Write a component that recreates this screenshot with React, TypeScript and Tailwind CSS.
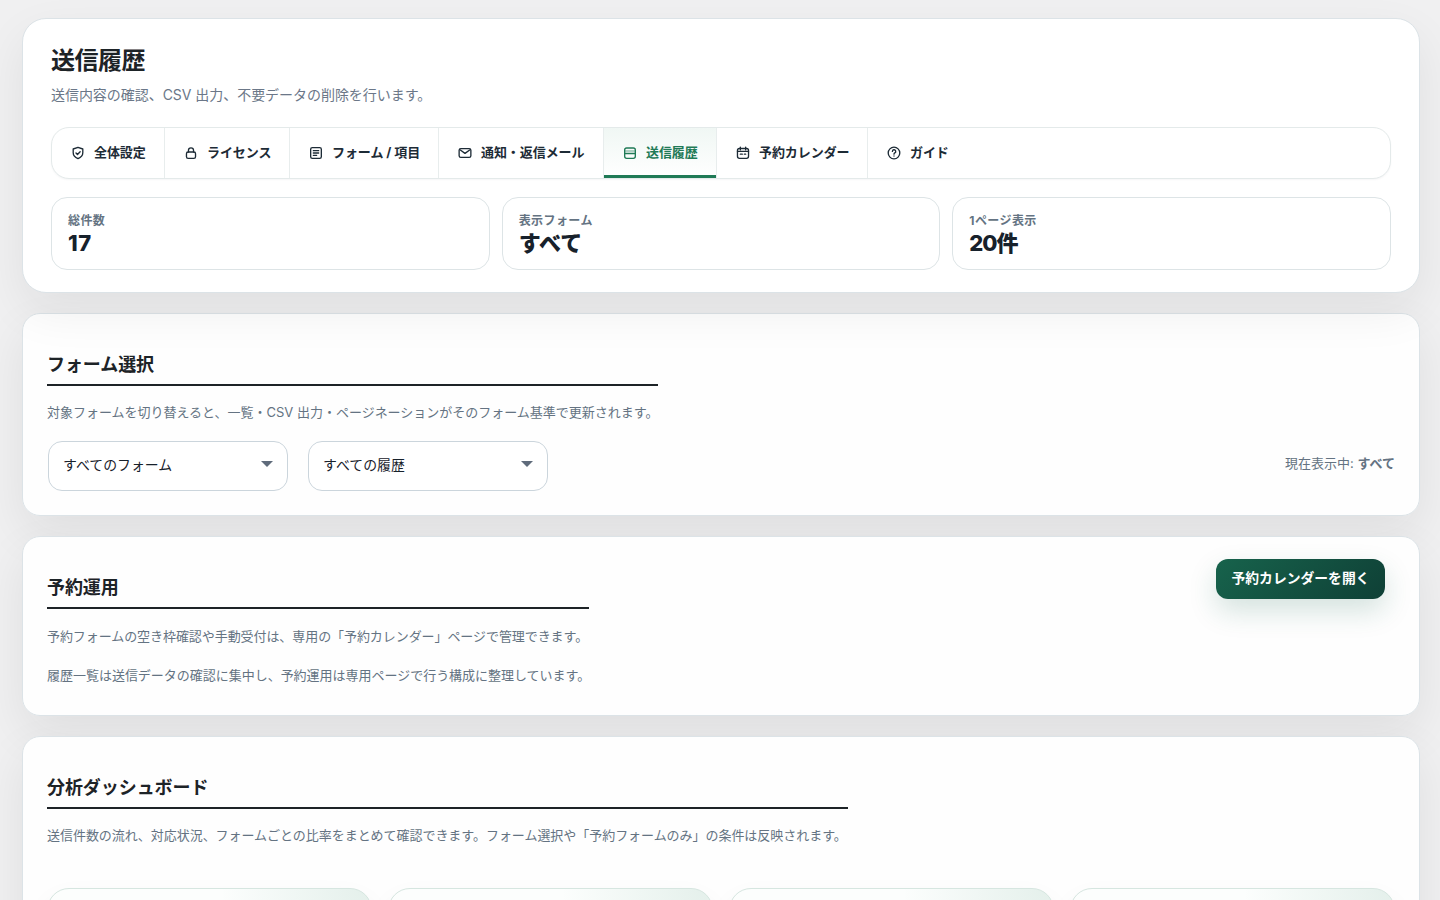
import React from 'react';

type IconProps = { children: React.ReactNode };

const Icon = ({ children }: IconProps) => (
  <svg
    className="h-4 w-4 shrink-0"
    viewBox="0 0 24 24"
    fill="none"
    stroke="currentColor"
    strokeWidth="2"
    strokeLinecap="round"
    strokeLinejoin="round"
  >
    {children}
  </svg>
);

const tabs = [
  {
    label: '全体設定',
    width: 'w-[113px]',
    icon: (
      <>
        <path d="M12 3.5l7.2 2.5v5.5c0 4.3-3 7.2-7.2 9-4.2-1.8-7.2-4.7-7.2-9V6z" />
        <path d="M9 12l2.2 2.2 4-4.2" />
      </>
    ),
  },
  {
    label: 'ライセンス',
    width: 'w-[125px]',
    icon: (
      <>
        <rect x="5.2" y="10.5" width="13.6" height="9.5" rx="2.5" />
        <path d="M8.2 10.5V8a3.8 3.8 0 0 1 7.6 0v2.5" />
      </>
    ),
  },
  {
    label: 'フォーム / 項目',
    width: 'w-[149px]',
    icon: (
      <>
        <rect x="4" y="4" width="16" height="16" rx="2.5" />
        <path d="M8 8.5h8M8 12h8M8 15.5h5" />
      </>
    ),
  },
  {
    label: '通知・返信メール',
    width: 'w-[165px]',
    icon: (
      <>
        <rect x="3.2" y="5.5" width="17.6" height="13" rx="2.5" />
        <path d="M5 7.5l7 5 7-5" />
      </>
    ),
  },
  {
    label: '送信履歴',
    width: 'w-[113px]',
    active: true,
    icon: (
      <>
        <rect x="4" y="4.5" width="16" height="15.5" rx="3" />
        <path d="M4 12.8h16" />
        <path d="M5 9h14" strokeOpacity="0.45" />
      </>
    ),
  },
  {
    label: '予約カレンダー',
    width: 'w-[151px]',
    icon: (
      <>
        <rect x="3.7" y="5.2" width="16.6" height="14.8" rx="3" />
        <path d="M8 3.2v4M16 3.2v4M3.7 9.5h16.6M8 13.7h3M14 13.7h2" />
      </>
    ),
  },
  {
    label: 'ガイド',
    width: 'w-[100px]',
    icon: (
      <>
        <circle cx="12" cy="12" r="8.7" />
        <path d="M9.6 9.6a2.5 2.5 0 1 1 3.7 2.2c-.9.5-1.3 1-1.3 1.9M12 16.5v.1" />
      </>
    ),
  },
];

const stats = [
  { label: '総件数', value: '17', tracking: 'tracking-[0.02em]' },
  { label: '表示フォーム', value: 'すべて', tracking: 'tracking-normal' },
  { label: '1ページ表示', value: '20件', tracking: 'tracking-[-0.05em]' },
];

const Tabs = () => (
  <nav className="mt-[21px] flex h-[52px] overflow-hidden rounded-[18px] border border-[#e4eaea] bg-white shadow-[0_1px_2px_rgba(15,23,42,0.04)]">
    {tabs.map((tab, i) => (
      <a
        key={tab.label}
        className={`flex shrink-0 items-center gap-2 whitespace-nowrap pl-[18px] text-[13px] font-bold tracking-[-0.005em] ${tab.width} ${
          i < tabs.length - 1 ? 'border-r border-[#e8eded]' : ''
        } ${
          tab.active
            ? 'bg-linear-to-b from-[#f0f7f4] to-white text-[#1f7a56] shadow-[inset_0_-3px_0_#1f7a56]'
            : 'text-[#1d2b36]'
        }`}
      >
        <Icon>{tab.icon}</Icon>
        <span>{tab.label}</span>
      </a>
    ))}
  </nav>
);

const Heading = ({ children }: { children: React.ReactNode }) => (
  <h2 className="border-b-2 border-[#1d2327] pb-1.5 text-[18px] leading-[27px] font-bold tracking-[-0.004em] text-[#1d2327]">
    {children}
  </h2>
);

const Note = ({ children, className = '' }: { children: React.ReactNode; className?: string }) => (
  <p className={`whitespace-nowrap text-[13px] leading-5 text-[#647382] ${className}`}>{children}</p>
);

const Select = ({ label }: { label: string }) => (
  <div className="flex h-[50px] w-60 items-center justify-between rounded-[14px] border border-[#cbd5dc] bg-white pr-3.5 pl-3.5 text-[13.9px] text-[#17212b]">
    <span className="mb-0.5">{label}</span>
    <svg className="mb-1 h-1.5 w-3" viewBox="0 0 12 6" fill="#5f6b7b">
      <path d="M0 0h12L6 6z" />
    </svg>
  </div>
);

const card =
  'rounded-[18px] border border-[#dce3e7] bg-white/93 px-6 shadow-[0_18px_48px_rgba(22,24,28,0.075)]';

const App = () => {
  return (
    <div className="flex h-screen flex-col gap-5 overflow-hidden bg-[#f0f0f1] pt-[18px] pr-5 pl-[22px] font-[Inter,'Noto_Sans_CJK_JP',sans-serif] text-[#1d2327]">
      {/* Page header */}
      <header className="relative h-[275px] shrink-0 rounded-3xl border border-[#dce3e7] bg-white px-7 pt-6 shadow-[0_18px_48px_rgba(22,28,28,0.07)]">
        <h1 className="text-[24px] leading-9 font-bold tracking-[-0.02em]">送信履歴</h1>
        <p className="mt-[5px] text-[14px] leading-[22px] tracking-[-0.003em] text-[#6b7788]">
          送信内容の確認、CSV 出力、不要データの削除を行います。
        </p>
        <Tabs />
        <div className="mt-[18px] grid grid-cols-3 gap-3">
          {stats.map((stat) => (
            <div key={stat.label} className="h-[73px] rounded-2xl border border-[#dde4e6] bg-white px-4 pt-3.5">
              <div className="text-[12px] leading-[18px] font-bold tracking-[0.035em] text-[#647382]">{stat.label}</div>
              <div className={`text-[22px] leading-[26px] font-extrabold text-[#17212b] ${stat.tracking}`}>{stat.value}</div>
            </div>
          ))}
        </div>
      </header>

      {/* Form filter */}
      <section className={`h-[203px] shrink-0 pt-[37px] ${card}`}>
        <div className="w-[611px]">
          <Heading>フォーム選択</Heading>
          <div className="mt-4">
            <Note className="tracking-[-0.01px]">
              対象フォームを切り替えると、一覧・CSV 出力・ページネーションがそのフォーム基準で更新されます。
            </Note>
          </div>
        </div>
        <div className="mt-[19px] flex items-center gap-5 pl-px">
          <Select label="すべてのフォーム" />
          <Select label="すべての履歴" />
          <div className="mb-1 ml-auto text-[13px] text-[#647382]">
            現在表示中: <strong className="font-bold">すべて</strong>
          </div>
        </div>
      </section>

      {/* Reservations */}
      <section className={`flex h-[180px] shrink-0 items-start justify-between ${card}`}>
        <div className="w-[542px] pt-[37px]">
          <div className="h-9">
            <Heading>予約運用</Heading>
          </div>
          <div className="mt-4 flex flex-col gap-[19px]">
            <Note className="tracking-[-0.07px]">
              予約フォームの空き枠確認や手動受付は、専用の「予約カレンダー」ページで管理できます。
            </Note>
            <Note className="tracking-[-0.02px]">
              履歴一覧は送信データの確認に集中し、予約運用は専用ページで行う構成に整理しています。
            </Note>
          </div>
        </div>
        <button className="mt-[22px] mr-2.5 h-10 w-[169px] rounded-xl bg-linear-135 from-[#17634c] to-[#0f4036] pb-px text-[13.8px] font-bold whitespace-nowrap text-white shadow-[0_12px_28px_rgba(23,99,76,0.18)]">
          予約カレンダーを開く
        </button>
      </section>

      {/* Analytics */}
      <section className={`h-[400px] shrink-0 pt-[37px] ${card}`}>
        <div className="w-[801px]">
          <Heading>分析ダッシュボード</Heading>
          <div className="mt-4">
            <Note className="tracking-[-0.04px]">
              送信件数の流れ、対応状況、フォームごとの比率をまとめて確認できます。フォーム選択や「予約フォームのみ」の条件は反映されます。
            </Note>
          </div>
        </div>
        <div className="mt-[43px] grid grid-cols-4 gap-4">
          {[0, 1, 2, 3].map((n) => (
            <div
              key={n}
              className="h-40 rounded-[22px] border border-[#d6e6e0] bg-[#fcfefd] bg-[radial-gradient(circle_at_top_right,rgba(31,122,86,0.11),transparent_42%)] shadow-[0_12px_28px_rgba(15,23,42,0.05)]"
            />
          ))}
        </div>
      </section>
    </div>
  );
};

export default App;
